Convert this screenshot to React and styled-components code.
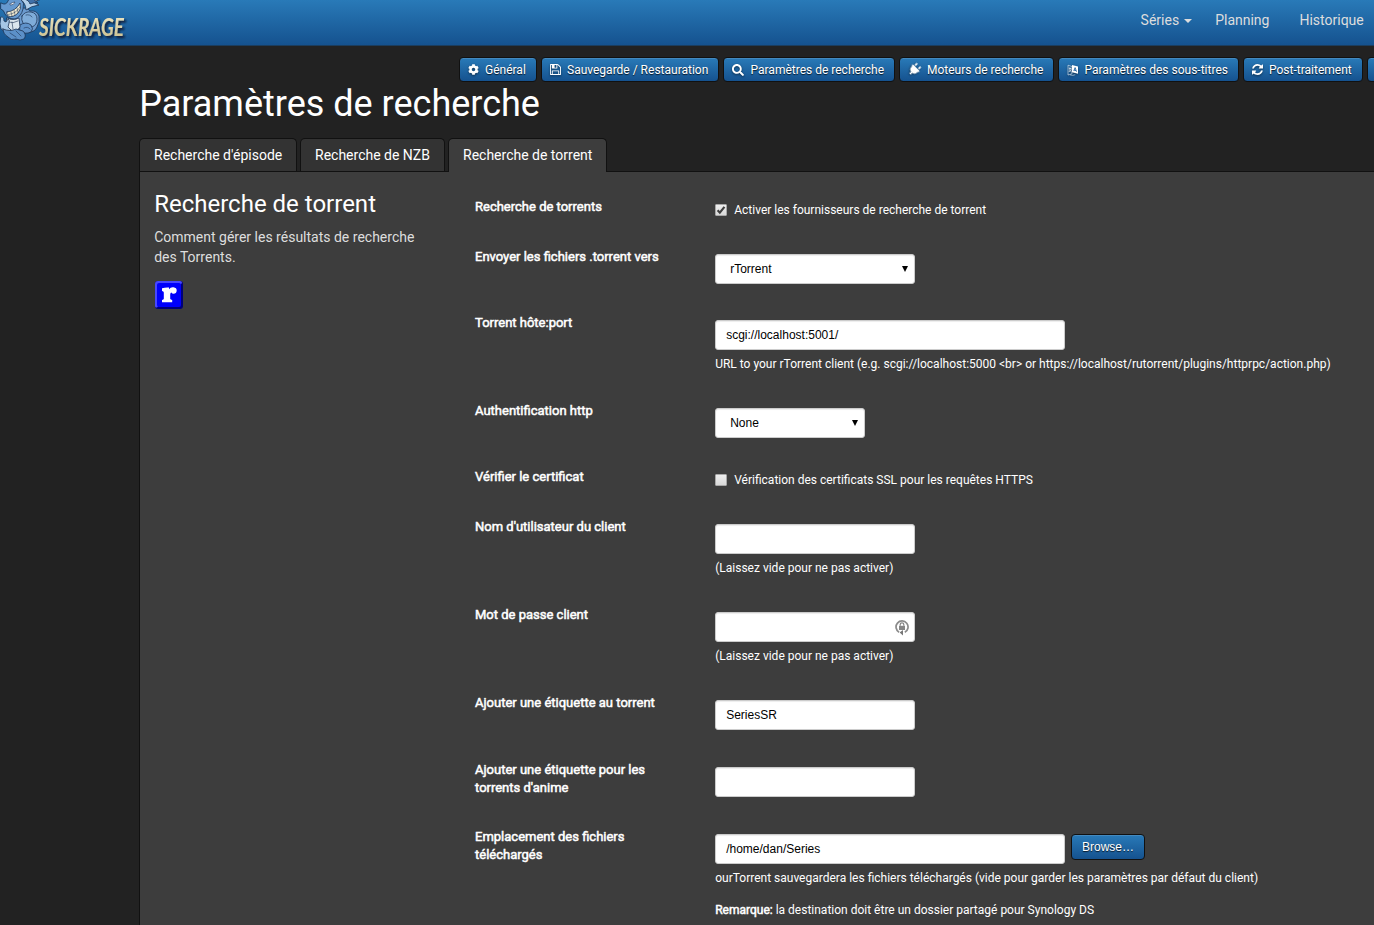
import styled, { createGlobalStyle } from "styled-components";
import { FaCog, FaSearch, FaPlug } from "react-icons/fa";

const GlobalStyle = createGlobalStyle`
  * {
    box-sizing: border-box;
  }
  body {
    margin: 0;
    overflow: hidden;
    background: #222;
    color: #fff;
    font-family: Roboto, "Liberation Sans", sans-serif;
    font-size: 14px;
    line-height: 20px;
  }
`;

const SaveIcon = () => (
  <svg viewBox="0 0 1536 1536" width="11" height="11" fill="currentColor">
    <path d="M384 1408h768v-384H384v384zm896 0h128V512q0-14-10-38.500t-20-34.500l-281-281q-10-10-34-20t-39-10v416q0 40-28 68t-68 28H352q-40 0-68-28t-28-68V128H128v1280h128V992q0-40 28-68t68-28h832q40 0 68 28t28 68v416zM896 480V160q0-13-9.500-22.500T864 128H672q-13 0-22.500 9.500T640 160v320q0 13 9.500 22.500T672 512h192q13 0 22.500-9.500T896 480zm640 32v928q0 40-28 68t-68 28H96q-40 0-68-28t-28-68V96q0-40 28-68T96 0h928q40 0 88 20t76 48l280 280q28 28 48 76t20 88z" />
  </svg>
);

const RefreshIcon = () => (
  <svg viewBox="0 0 1536 1536" width="11" height="11" fill="currentColor">
    <path d="M1511 928q0 5-1 7-64 268-268 434.500t-478 166.500q-146 0-282.500-55t-243.500-157l-129 129q-19 19-45 19t-45-19-19-45v-448q0-26 19-45t45-19h448q26 0 45 19t19 45-19 45l-137 137q71 66 161 102t187 36q134 0 250-65t186-179q11-17 53-117 8-23 30-23h192q13 0 22.500 9.500t9.500 22.500zm25-800v448q0 26-19 45t-45 19h-448q-26 0-45-19t-19-45 19-45l138-138q-148-137-349-137-134 0-250 65t-186 179q-11 17-53 117-8 23-30 23h-199q-13 0-22.500-9.500t-9.500-22.500v-7q65-268 270-434.500t480-166.500q146 0 284 55.500t245 156.500l130-129q19-19 45-19t45 19 19 45z" />
  </svg>
);

const LanguageIcon = () => (
  <svg viewBox="0 0 12 12" width="12" height="12" fill="none" stroke="currentColor">
    <path d="M1 1.200l4 1.300v7.300L1 11z" strokeWidth=".7" opacity=".75" />
    <path d="M1.800 4.200l2.600.4M3 3.500v2.400M1.800 8l2.400-2.400M2.300 6l2.300 2" strokeWidth=".7" />
    <path d="M5 1l6 1.400v7.400L5 8.200z" fill="currentColor" stroke="none" />
    <path d="M6.800 7l1.300-3.400L9.500 7.700M7.200 6.100l1.800.5" stroke="#20629f" strokeWidth=".9" />
    <path d="M3 10.800c2 .8 4 .7 5.300-.4" strokeWidth=".7" opacity=".7" />
  </svg>
);

const LockIcon = () => (
  <svg width="14" height="17" viewBox="0 0 14 17" fill="none">
    <path d="M4.100 13.200A6 6 0 1 1 9.800 13.300" stroke="#8b8b8b" strokeWidth="1.700" />
    <path d="M4.600 13.600L8 11v5.600z" fill="#777" />
    <path d="M4 6.800h6v4.200H4z" fill="#858585" />
    <path d="M5.200 6.800V5.600a1.800 1.800 0 0 1 3.600 0v1.200" stroke="#858585" strokeWidth="1.200" />
  </svg>
);

const RTorrentIcon = () => (
  <svg width="28" height="28" viewBox="0 0 28 28">
    <rect width="28" height="28" rx="3" fill="#00007a" />
    <path d="M3 0h22q2 0 2 2L2 26.500Q0 27 0 25V3q0-3 3-3z" fill="#4848ff" />
    <rect x="2" y="2" width="24" height="24" rx="2" fill="#0000fb" />
    <path
      d="M7 7.300q3.500-1 7-.7v1.600q1.600-2.300 4.500-1.900 3.300.5 3.200 3.400-.3 3-3.100 3.100-1.600 0-2.200-1.200-1 .2-1.200 1.800v4.400q.2 1 2 1.300v2.200H7v-2.200q1.800-.4 1.800-1.400v-6.200Q8.700 10 7 9.900z"
      fill="#fff"
    />
  </svg>
);

const Logo = () => (
  <LogoBox viewBox="0 0 130 45">
    <defs>
      <linearGradient id="cream" x1="0" y1="0" x2="0" y2="1">
        <stop offset="0" stopColor="#f2eccb" />
        <stop offset="1" stopColor="#c9bd8c" />
      </linearGradient>
      <filter id="shade" x="-10%" y="-10%" width="125%" height="150%">
        <feDropShadow dx="2" dy="2" stdDeviation="1" floodColor="#08182b" floodOpacity=".95" />
      </filter>
    </defs>
    <g stroke="#1d3354" strokeWidth=".8" strokeLinejoin="round" strokeLinecap="round">
      {/* far arm and back */}
      <path d="M19 8q8-1 11 3 7-1 9 5 1 6-2 11-2 5-8 5l-8 1-6-9z" fill="#6c9bcf" />
      <path d="M22 16q3-5 9-4 6 1 6 7t-5 8q-7 1-9-4-2-3-1-7z" fill="#7facd9" />
      <path d="M20 25q6-4 11 0 3 4 0 7-6 3-11-1z" fill="#5f92ca" />
      {/* head, snout and fin */}
      <path d="M1 3Q6 6 8 1L9-1h12q4 4 2 10-2 8-8 10-7 0-10-5-1-4-4-5z" fill="#6699cf" />
      <path d="M20-1q6 4 6 11 5-4 13-5L33 2l9-3z" fill="#b3d0ea" />
      <path d="M24-1q5 1 6 5 5-2 8-1l-5-4z" fill="#3f70a8" />
      {/* grin */}
      <path d="M7 12q9-1 13-9 2 6-2 10-5 5-10 3-2-2-1-4z" fill="#f1ead0" />
      <path d="M8 14.500Q16 14 20 7M11 12l1 4M14 10l1 5M17 8l1 4.500" fill="none" strokeWidth=".5" />
      <path d="M10 4q3-2 5-2-1 3-4 3z" fill="#fff" strokeWidth=".6" />
      {/* chest */}
      <path d="M7 18q6 3 12 0l1 9-4 5-7-2-3-6z" fill="#dce6ee" />
      <path d="M8 22q5 2 10-1M12 22l1 7" fill="none" strokeWidth=".6" />
      {/* near hand and leg */}
      <path d="M1 17q3-1 3 4l2 1 2-3q2 1 1 4l-1 4 3 3-4 3-6-4-1-5z" fill="#a5c6e6" />
      <path d="M3 29q7 3 13 0l7 2q4 4 1 8-4 2-8 0-5 2-8-2-5-3-5-8z" fill="#5c90c8" />
      <path d="M10 33l6 4M16 31l5 5M26 15q4-1 6 2M24 28q4-2 6 1" fill="none" strokeWidth=".6" />
    </g>
    <LogoText x="39" y="35.500" textLength="85" lengthAdjust="spacingAndGlyphs">
      SICKRAGE
    </LogoText>
  </LogoBox>
);

const TiltedPlug = () => (
  <PlugBox>
    <FaPlug size={13} />
  </PlugBox>
);

const subMenu = [
  { label: "Général", icon: <FaCog size={11} />, width: 78 },
  { label: "Sauvegarde / Restauration", icon: <SaveIcon />, width: 178 },
  { label: "Paramètres de recherche", icon: <FaSearch size={12} />, width: 172, slot: 18.5 },
  { label: "Moteurs de recherche", icon: <TiltedPlug />, width: 155, slot: 19 },
  { label: "Paramètres des sous-titres", icon: <LanguageIcon />, width: 181, slot: 17.5 },
  { label: "Post-traitement", icon: <RefreshIcon />, width: 120 },
  { label: "", icon: null, width: 60 },
];

const Field = ({ label, extra, children }) => (
  <Row $extra={extra}>
    <Label>{label}</Label>
    <Content>{children}</Content>
  </Row>
);

const Option = ({ checked, children }) => (
  <CheckLabel>
    <CheckBox>
      {checked && (
        <svg width="10" height="10" viewBox="0 0 11 11" fill="none">
          <path d="M1.800 5.800l2.400 2.600L9.300 2" stroke="#3f3f3f" strokeWidth="2.400" />
        </svg>
      )}
    </CheckBox>
    {children}
  </CheckLabel>
);

const Dropdown = ({ value, width }) => (
  <Input $width={width} $select>
    {value}
    <svg width="6" height="6" viewBox="0 0 6 6">
      <path d="M0 0h6L3 6z" fill="#000" />
    </svg>
  </Input>
);

export default function App() {
  return (
    <>
      <GlobalStyle />
      <Navbar>
        <Logo />
        <NavLinks>
          <NavLink>
            Séries <Caret />
          </NavLink>
          <NavLink>Planning</NavLink>
          <NavLink>Historique</NavLink>
        </NavLinks>
      </Navbar>
      <SubMenu>
        {subMenu.map(({ label, icon, width, slot }) => (
          <MenuButton key={label} $width={width}>
            <IconSlot $width={slot}>{icon}</IconSlot>
            {label}
          </MenuButton>
        ))}
      </SubMenu>
      <Main>
        <Title>Paramètres de recherche</Title>
        <Tabs>
          <Tab $width={158}>Recherche d'épisode</Tab>
          <Tab $width={145}>Recherche de NZB</Tab>
          <Tab $width={159} $active>
            Recherche de torrent
          </Tab>
        </Tabs>
        <Panel>
          <Description>
            <SectionTitle>Recherche de torrent</SectionTitle>
            <p>Comment gérer les résultats de recherche des Torrents.</p>
            <RTorrentIcon />
          </Description>
          <Fields>
            <Field label="Recherche de torrents">
              <Option checked>Activer les fournisseurs de recherche de torrent</Option>
            </Field>
            <Field label="Envoyer les fichiers .torrent vers">
              <Dropdown value="rTorrent" width={200} />
            </Field>
            <Field label="Torrent hôte:port">
              <Input $width={350}>scgi://localhost:5001/</Input>
              <Help>
                {"URL to your rTorrent client (e.g. scgi://localhost:5000 <br> or https://localhost/rutorrent/plugins/httprpc/action.php)"}
              </Help>
            </Field>
            <Field label="Authentification http">
              <Dropdown value="None" width={150} />
            </Field>
            <Field label="Vérifier le certificat">
              <Option>Vérification des certificats SSL pour les requêtes HTTPS</Option>
            </Field>
            <Field label="Nom d'utilisateur du client">
              <Input $width={200} />
              <Help>(Laissez vide pour ne pas activer)</Help>
            </Field>
            <Field label="Mot de passe client">
              <Input $width={200} $end>
                <LockIcon />
              </Input>
              <Help>(Laissez vide pour ne pas activer)</Help>
            </Field>
            <Field label="Ajouter une étiquette au torrent" extra={1}>
              <Input $width={200}>SeriesSR</Input>
            </Field>
            <Field label="Ajouter une étiquette pour les torrents d'anime" extra={1}>
              <Input $width={200} />
            </Field>
            <Field label="Emplacement des fichiers téléchargés">
              <Browse>
                <Input $width={350}>/home/dan/Series</Input>
                <BrowseButton>Browse…</BrowseButton>
              </Browse>
              <Help>
                ourTorrent sauvegardera les fichiers téléchargés (vide pour garder les paramètres par
                défaut du client)
              </Help>
              <Note>
                <b>Remarque:</b> la destination doit être un dossier partagé pour Synology DS
              </Note>
            </Field>
          </Fields>
        </Panel>
      </Main>
    </>
  );
}

const Navbar = styled.nav`
  display: flex;
  height: 46px;
  background: linear-gradient(#297ab8, #15528f);
  border-bottom: 1px solid #1b3d5e;
`;

const LogoBox = styled.svg`
  flex: none;
  width: 130px;
  height: 45px;
  overflow: visible;
`;

const LogoText = styled.text`
  font-family: Lato, sans-serif;
  font-size: 25px;
  font-weight: 700;
  font-style: italic;
  fill: url(#cream);
  filter: url(#shade);
`;

const NavLinks = styled.div`
  display: flex;
  flex: none;
  margin-left: 1010.6px;
  padding-top: 10px;
`;

const NavLink = styled.a`
  display: flex;
  align-items: center;
  height: 20px;
  margin-right: 30px;
  color: #ddd;
  white-space: nowrap;
  &:first-child {
    margin-right: 23px;
  }
`;

const Caret = styled.span`
  margin: 2px 0 0 5px;
  border: 4px solid transparent;
  border-top-color: #ddd;
  border-bottom: 0;
`;

const SubMenu = styled.div`
  display: flex;
  gap: 4px;
  height: 36px;
  padding: 11px 0 0 459px;
  overflow: hidden;
`;

const MenuButton = styled.button`
  display: flex;
  flex: none;
  align-items: center;
  width: ${({ $width }) => $width}px;
  height: 25px;
  padding: 0 0 0 8px;
  border: 1px solid #111;
  border-radius: 4px;
  background: linear-gradient(#297ab8, #15528f);
  box-shadow: inset 0 1px 0 rgba(255, 255, 255, 0.12);
  color: #fff;
  font: 12px Roboto, sans-serif;
  text-shadow: 0 1px 1px rgba(0, 0, 0, 0.75);
  white-space: nowrap;
`;

const IconSlot = styled.span`
  display: flex;
  flex: none;
  width: ${({ $width = 17 }) => $width}px;
  svg {
    filter: drop-shadow(0 1px 1px rgba(0, 0, 0, 0.5));
  }
`;

const PlugBox = styled.span`
  display: flex;
  transform: rotate(45deg);
`;

const Main = styled.main`
  margin-left: 139px;
  overflow: hidden;
`;

const Title = styled.h1`
  margin: 0;
  height: 56px;
  padding: 1px 0 0 0.2px;
  font-size: 36px;
  font-weight: 400;
  line-height: 42px;
`;

const Tabs = styled.div`
  display: flex;
  gap: 3px;
  height: 33px;
`;

const Tab = styled.div`
  width: ${({ $width }) => $width}px;
  height: ${({ $active }) => ($active ? 34 : 33)}px;
  padding: 6px 0 0 14px;
  border: 1px solid #111;
  border-bottom: 0;
  border-radius: 5px 5px 0 0;
  background: ${({ $active }) => ($active ? "#3d3d3d" : "#333")};
  white-space: nowrap;
  z-index: 1;
`;

const Panel = styled.section`
  display: flex;
  height: 754px;
  border: 1px solid #111;
  border-width: 1px 0 0 1px;
  background: #3d3d3d;
`;

const Description = styled.div`
  flex: none;
  width: 321px;
  padding: 18px 40px 0 14.2px;
  p {
    margin: 9px 0 14px;
    color: #ddd;
  }
  svg {
    margin-left: 0.8px;
  }
`;

const SectionTitle = styled.h2`
  margin: 0;
  font-size: 24px;
  font-weight: 400;
  line-height: 28px;
`;

const Fields = styled.div`
  flex: none;
  padding: 25px 0 0 14px;
  font-size: 12px;
  line-height: 17px;
`;

const Row = styled.div`
  display: flex;
  padding-bottom: ${({ $extra = 0 }) => 29 + $extra}px;
`;

/* thickened regular weight, keeps the regular advance widths */
const Label = styled.div`
  width: 240px;
  height: 20px;
  padding: 1px 40px 0 0;
  font-size: 13px;
  line-height: 18px;
  -webkit-text-stroke: 0.5px #fff;
`;

const Content = styled.div`
  padding-top: 7px;
`;

const CheckLabel = styled.label`
  display: flex;
  gap: 7.2px;
  height: 14px;
  line-height: 12px;
`;

const CheckBox = styled.span`
  display: flex;
  width: 12px;
  height: 12px;
  border: 1px solid #a8a8a8;
  border-radius: 1px;
  background: linear-gradient(#eee, #d8d8d8);
`;

const Input = styled.div`
  display: flex;
  align-items: center;
  justify-content: ${({ $select, $end }) => ($select ? "space-between" : $end ? "flex-end" : "flex-start")};
  width: ${({ $width }) => $width}px;
  height: 30px;
  padding: ${({ $select }) => ($select ? "0 6px 0 14.2px" : "0 5px 0 10.2px")};
  border: 1px solid #ccc;
  border-radius: 3px;
  background: #fff;
  box-shadow: inset 0 1px 1px rgba(0, 0, 0, 0.075);
  color: #000;
  font: 12px "Liberation Sans", Arial, sans-serif;
`;

const Help = styled.div`
  height: 22px;
  padding: 6px 0 0 0.2px;
  white-space: nowrap;
`;

const Note = styled.div`
  padding: 16px 0 0 0.2px;
  white-space: nowrap;
  b {
    font-weight: 400;
    -webkit-text-stroke: 0.5px #fff;
  }
`;

const Browse = styled.div`
  display: flex;
  gap: 6px;
`;

const BrowseButton = styled(MenuButton)`
  justify-content: center;
  width: 74px;
  height: 26px;
  padding: 0;
  font-family: "Liberation Sans", Arial, sans-serif;
`;
